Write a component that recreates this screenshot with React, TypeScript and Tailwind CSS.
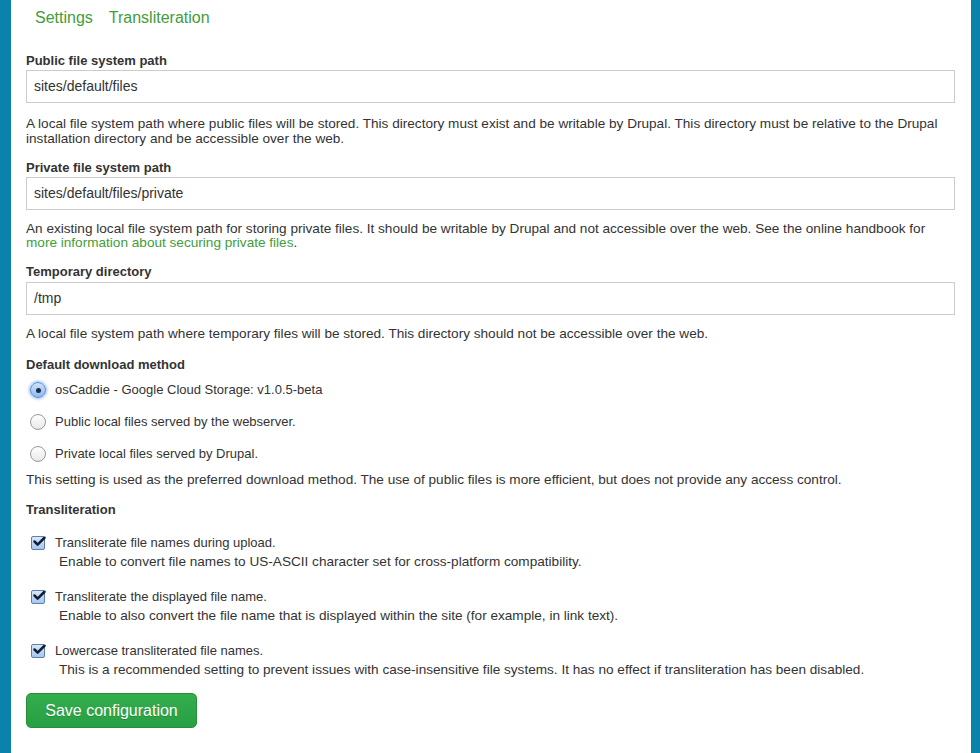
import { Check } from 'lucide-react'

const font = { fontFamily: '"Liberation Sans", Arial, sans-serif' }

export default function App() {
  return (
    <div className="flex min-h-[753px] bg-white text-[#333]" style={font}>
      <div className="w-[11px] shrink-0 bg-[#0a82ab]" />
      <main className="flex-1 pl-[15px] pr-[16px]">
        <nav className="flex gap-[16px] pl-[9px] pt-[8px] text-[16px] leading-[20px] text-[#3f9d3a]">
          <a>Settings</a>
          <a>Transliteration</a>
        </nav>

        <TextField
          className="mt-[25px]"
          label="Public file system path"
          value="sites/default/files"
        />
        <p className="mt-[13px] text-[13.6px] leading-[15px]">
          A local file system path where public files will be stored. This directory must exist and be writable by
          Drupal. This directory must be relative to the Drupal installation directory and be accessible over the web.
        </p>

        <TextField
          className="mt-[14px]"
          label="Private file system path"
          value="sites/default/files/private"
        />
        <p className="mt-[12px] text-[13.6px] leading-[14px]">
          An existing local file system path for storing private files. It should be writable by Drupal and not
          accessible over the web. See the online handbook for{' '}
          <a className="text-[#3f9d3a]">more information about securing private files</a>.
        </p>

        <TextField className="mt-[14px]" label="Temporary directory" value="/tmp" inputClass="mt-[2px]" />
        <p className="mt-[11px] text-[13.6px] leading-[15px]">
          A local file system path where temporary files will be stored. This directory should not be accessible over
          the web.
        </p>

        <h3 className="mt-[16px] text-[13px] font-bold leading-[16px]">Default download method</h3>
        <div className="mt-[9px] flex flex-col gap-[16px] pl-[4px]">
          <Radio checked label="osCaddie - Google Cloud Storage: v1.0.5-beta" />
          <Radio label="Public local files served by the webserver." />
          <Radio label="Private local files served by Drupal." />
        </div>
        <p className="mt-[10px] text-[13.6px] leading-[15px]">
          This setting is used as the preferred download method. The use of public files is more efficient, but does
          not provide any access control.
        </p>

        <h3 className="mt-[15px] text-[13px] font-bold leading-[16px]">Transliteration</h3>
        <div className="mt-[17px] flex flex-col gap-[19px] pl-[5px]">
          <CheckItem
            label="Transliterate file names during upload."
            note="Enable to convert file names to US-ASCII character set for cross-platform compatibility."
          />
          <CheckItem
            label="Transliterate the displayed file name."
            note="Enable to also convert the file name that is displayed within the site (for example, in link text)."
          />
          <CheckItem
            label="Lowercase transliterated file names."
            note="This is a recommended setting to prevent issues with case-insensitive file systems. It has no effect if transliteration has been disabled."
          />
        </div>

        <button className="mt-[15px] h-[35px] w-[171px] rounded-[5px] border border-[#2a8c34] bg-gradient-to-b from-[#33ad4e] to-[#27a043] text-[16px] text-white [text-shadow:0_1px_0_rgba(0,0,0,0.2)]">
          Save configuration
        </button>
      </main>
      <div className="w-[9px] shrink-0 bg-[#0a82ab]" />
    </div>
  )
}

function TextField({
  label,
  value,
  className = '',
  inputClass = 'mt-[1px]',
}: {
  label: string
  value: string
  className?: string
  inputClass?: string
}) {
  return (
    <div className={className}>
      <label className="block text-[13px] font-bold leading-[16px]">{label}</label>
      <div
        className={`${inputClass} flex h-[33px] items-center border border-[#ccc] bg-white px-[7px] text-[14px] text-[#333]`}
      >
        {value}
      </div>
    </div>
  )
}

function Radio({ label, checked = false }: { label: string; checked?: boolean }) {
  return (
    <div className="flex items-center gap-[9px] text-[13px] leading-[16px]">
      {checked ? (
        <span className="flex size-[16px] items-center justify-center rounded-full border border-[#5b8fd6] bg-gradient-to-b from-[#cfe2fb] to-[#8fb9ee] shadow-[0_0_3px_1px_rgba(80,140,230,0.6)]">
          <span className="size-[5px] rounded-full bg-[#1a2a40]" />
        </span>
      ) : (
        <span className="size-[16px] rounded-full border border-[#999] bg-gradient-to-b from-white to-[#e8e8e8]" />
      )}
      <span>{label}</span>
    </div>
  )
}

function CheckItem({ label, note }: { label: string; note: string }) {
  return (
    <div className="text-[13px] leading-[16px]">
      <div className="flex items-center gap-[10px]">
        <span className="relative size-[14px] rounded-[2px] border border-[#5b7fb0] bg-gradient-to-b from-[#dbe8f8] to-[#a8c6ec]">
          <Check className="absolute -top-[3px] left-[0px] size-[15px] text-[#0f1f3a]" strokeWidth={4} />
        </span>
        <span>{label}</span>
      </div>
      <p className="mt-[3px] pl-[28px] text-[13.6px]">{note}</p>
    </div>
  )
}
